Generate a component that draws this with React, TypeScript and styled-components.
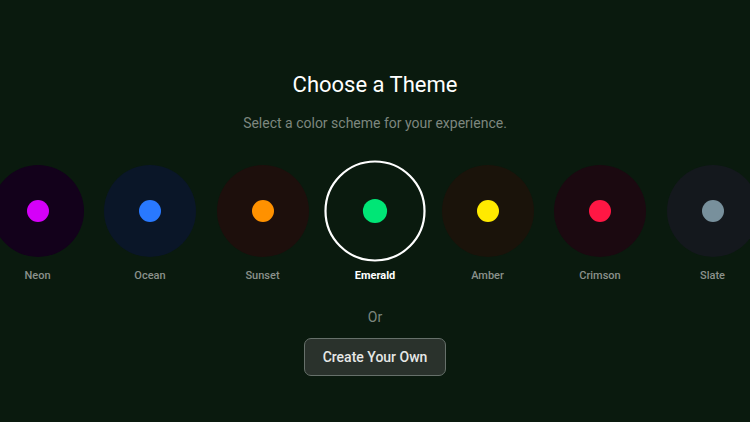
import React, { useState } from 'react';
import styled, { createGlobalStyle } from 'styled-components';

type ThemeT = {
  id: string;
  name: string;
  dot: string;
  bg: string;
};

const themes: ThemeT[] = [
  { id: 'neon', name: 'Neon', dot: '#d500f9', bg: '#13011b' },
  { id: 'ocean', name: 'Ocean', dot: '#2979ff', bg: '#0a1628' },
  { id: 'sunset', name: 'Sunset', dot: '#ff9100', bg: '#1d0f0c' },
  { id: 'emerald', name: 'Emerald', dot: '#00e676', bg: '#0a1a0e' },
  { id: 'amber', name: 'Amber', dot: '#ffea00', bg: '#1a130a' },
  { id: 'crimson', name: 'Crimson', dot: '#ff1744', bg: '#1b0910' },
  { id: 'slate', name: 'Slate', dot: '#78909c', bg: '#14181d' },
];

const GlobalStyle = createGlobalStyle`
  html, body {
    margin: 0;
    padding: 0;
    background: #0a1a0e;
    overflow: hidden;
  }
  body {
    font-family: Roboto, 'Liberation Sans', sans-serif;
  }
`;

const Page = styled.div`
  width: 750px;
  height: 422px;
  display: flex;
  flex-direction: column;
  align-items: center;
  padding-top: 72px;
  box-sizing: border-box;
  background: #0a1a0e;
  overflow: hidden;
`;

const Title = styled.h1`
  margin: 0;
  font-size: 22px;
  line-height: 26px;
  font-weight: 400;
  color: #ffffff;
`;

const Subtitle = styled.p`
  margin: 16px 0 0;
  font-size: 14px;
  line-height: 18px;
  color: #7d877f;
`;

const ThemeRow = styled.div`
  margin-top: 33px;
  width: 750px;
  display: flex;
  justify-content: center;
  gap: 20.5px;
`;

const ThemeItem = styled.button`
  flex: 0 0 92px;
  display: flex;
  flex-direction: column;
  align-items: center;
  gap: 12px;
  padding: 0;
  border: none;
  background: none;
  cursor: pointer;
  font-family: inherit;
`;

const Swatch = styled.div<{ $bg: string; $active: boolean }>`
  width: 92px;
  height: 92px;
  box-sizing: border-box;
  border-radius: 50%;
  background: ${p => p.$bg};
  border: 2px solid ${p => (p.$active ? '#ffffff' : 'transparent')};
  transform: scale(${p => (p.$active ? 1.1 : 1)});
  display: flex;
  align-items: center;
  justify-content: center;
`;

const Dot = styled.span<{ $color: string }>`
  width: 22px;
  height: 22px;
  border-radius: 50%;
  background: ${p => p.$color};
`;

const Label = styled.span<{ $active: boolean }>`
  font-size: 11px;
  line-height: 13px;
  font-weight: ${p => (p.$active ? 700 : 500)};
  color: ${p => (p.$active ? '#ffffff' : '#8a918b')};
`;

const OrText = styled.p`
  margin: 26px 0 0;
  font-size: 14px;
  line-height: 18px;
  color: #7d877f;
`;

const CreateButton = styled.button`
  margin-top: 12px;
  width: 142px;
  height: 38px;
  border-radius: 7px;
  border: 1.5px solid #66706a;
  background: #2a322c;
  color: #e6e8e6;
  font-family: Roboto, 'Liberation Sans', sans-serif;
  font-size: 14px;
  font-weight: 500;
  cursor: pointer;
`;

export default function App() {
  const [selected, setSelected] = useState('emerald');

  return (
    <>
      <GlobalStyle />
      <Page>
        <Title>Choose a Theme</Title>
        <Subtitle>Select a color scheme for your experience.</Subtitle>
        <ThemeRow>
          {themes.map(theme => (
            <ThemeItem key={theme.id} onClick={() => setSelected(theme.id)}>
              <Swatch $bg={theme.bg} $active={selected === theme.id}>
                <Dot $color={theme.dot} />
              </Swatch>
              <Label $active={selected === theme.id}>{theme.name}</Label>
            </ThemeItem>
          ))}
        </ThemeRow>
        <OrText>Or</OrText>
        <CreateButton>Create Your Own</CreateButton>
      </Page>
    </>
  );
}
